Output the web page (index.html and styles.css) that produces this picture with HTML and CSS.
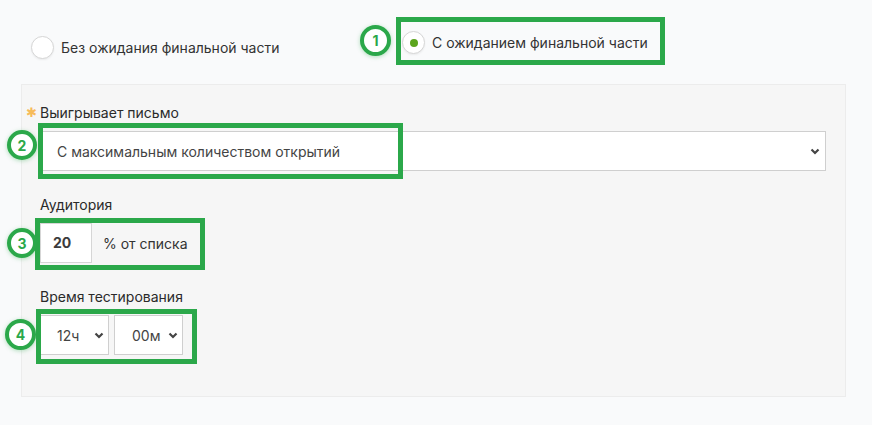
FILE: index.html
```html
<!DOCTYPE html>
<html lang="ru">
<head>
    <meta charset="UTF-8">
    <title>A/B тест</title>
    <link rel="stylesheet" href="styles.css">
</head>
<body>
    <div class="modes">
        <label class="option">
            <span class="radio"></span>
            <span>Без ожидания финальной части</span>
        </label>
        <label class="option option-active">
            <span class="radio radio-checked"></span>
            <span>С ожиданием финальной части</span>
            <span class="mark mark-1"></span>
            <span class="badge badge-1">1</span>
        </label>
    </div>

    <div class="panel">
        <div class="field-label"><span class="star">&#10033;</span>Выигрывает письмо</div>
        <div class="row">
            <div class="select select-wide">
                <span>С максимальным количеством открытий</span>
                <svg class="chev" width="10" height="7" viewBox="0 0 10 7"><path d="M1.5 1.5 L5 5 L8.5 1.5" fill="none" stroke="#444" stroke-width="2.2"/></svg>
            </div>
            <span class="mark mark-2"></span>
            <span class="badge badge-2">2</span>
        </div>

        <div class="field-label">Аудитория</div>
        <div class="row row-inline">
            <div class="num-input">20</div>
            <span class="suffix">% от списка</span>
            <span class="mark mark-3"></span>
            <span class="badge badge-3">3</span>
        </div>

        <div class="field-label">Время тестирования</div>
        <div class="row row-inline row-time">
            <div class="select select-small">
                <span>12ч</span>
                <svg class="chev" width="10" height="7" viewBox="0 0 10 7"><path d="M1.5 1.5 L5 5 L8.5 1.5" fill="none" stroke="#444" stroke-width="2.2"/></svg>
            </div>
            <div class="select select-small">
                <span>00м</span>
                <svg class="chev" width="10" height="7" viewBox="0 0 10 7"><path d="M1.5 1.5 L5 5 L8.5 1.5" fill="none" stroke="#444" stroke-width="2.2"/></svg>
            </div>
            <span class="mark mark-4"></span>
            <span class="badge badge-4">4</span>
        </div>
    </div>
</body>
</html>
```

FILE: styles.css
```css
body {
    margin: 0;
    background-color: #f9fafb;
    font-family: Inter, "Noto Sans", sans-serif;
    font-size: 14px;
    color: #2a2a2a;
}

/* переключатель режима */
.modes {
    display: grid;
    grid-template-columns: 371px auto;
    align-items: start;
    height: 84px;
    padding-left: 31px;
    box-sizing: border-box;
}

.option {
    position: relative;
    display: flex;
    align-items: center;
    gap: 7px;
    margin-top: 36px;
    color: #333;
    line-height: 22px;
}

.option-active {
    margin-top: 31px;
    justify-self: start;
}

.radio {
    width: 21px;
    height: 21px;
    border: 1px solid #d6d6d6;
    border-radius: 50%;
    background: #fff;
    box-shadow: 0 1px 2px rgba(0, 0, 0, 0.06);
    display: flex;
    align-items: center;
    justify-content: center;
}

.radio-checked::after {
    content: "";
    width: 8px;
    height: 8px;
    border-radius: 50%;
    background: #5ca51d;
}

/* панель настроек */
.panel {
    margin: 0 26px 0 21px;
    height: 313px;
    box-sizing: border-box;
    background: #f6f6f6;
    border: 1px solid #ececec;
    padding: 18px 19px 0 18px;
}

.field-label {
    line-height: 20px;
    color: #2a2a2a;
    margin-bottom: 8px;
}

.star {
    display: inline-block;
    width: 16px;
    margin-left: -16px;
    color: #f7bb5a;
    font-size: 13px;
    line-height: 18px;
    text-align: left;
    vertical-align: top;
    padding-left: 2px;
    box-sizing: border-box;
}

.row {
    position: relative;
    margin-bottom: 24px;
}

.row-inline {
    display: flex;
    align-items: center;
}

.row-time {
    gap: 5px;
}

.select {
    position: relative;
    display: flex;
    align-items: center;
    background: #fff;
    border: 1px solid #cfcfcf;
    box-sizing: border-box;
    color: #444;
}

.select-wide {
    height: 40px;
    padding-left: 16px;
}

.select-small {
    width: 69px;
    height: 40px;
    padding-left: 16px;
}

.select-small + .select-small {
    padding-left: 17px;
}

.chev {
    position: absolute;
    right: 5px;
    top: 16px;
}

.select-small .chev {
    right: 4px;
}

.num-input {
    width: 52px;
    height: 40px;
    box-sizing: border-box;
    background: #fff;
    border: 1px solid #d6d6d6;
    font-weight: 700;
    color: #3c3c3c;
    line-height: 38px;
    padding-left: 12px;
}

.suffix {
    margin-left: 11px;
    color: #333;
}

/* пометки поверх скриншота */
.mark {
    position: absolute;
    border: 5px solid #2ba84a;
    box-sizing: border-box;
    pointer-events: none;
}

.badge {
    position: absolute;
    width: 31px;
    height: 31px;
    box-sizing: border-box;
    border: 4px solid #2ba84a;
    border-radius: 50%;
    background: #fff;
    color: #2ba84a;
    font-weight: 700;
    font-size: 14px;
    display: flex;
    align-items: center;
    justify-content: center;
    box-shadow: 0 1px 4px rgba(43, 168, 74, 0.35);
}

.mark-1 { left: -6px; top: -14px; width: 269px; height: 48px; }
.badge-1 { left: -42px; top: -6px; }

.mark-2 { left: -2px; top: -8px; width: 365px; height: 56px; }
.badge-2 { left: -33px; top: -1px; width: 30px; height: 30px; }

.mark-3 { left: -5px; top: -5px; width: 170px; height: 52px; }
.badge-3 { left: -33px; top: 5px; width: 30px; height: 30px; }

.mark-4 { left: -4px; top: -6px; width: 161px; height: 55px; }
.badge-4 { left: -35px; top: 4px; }
```
